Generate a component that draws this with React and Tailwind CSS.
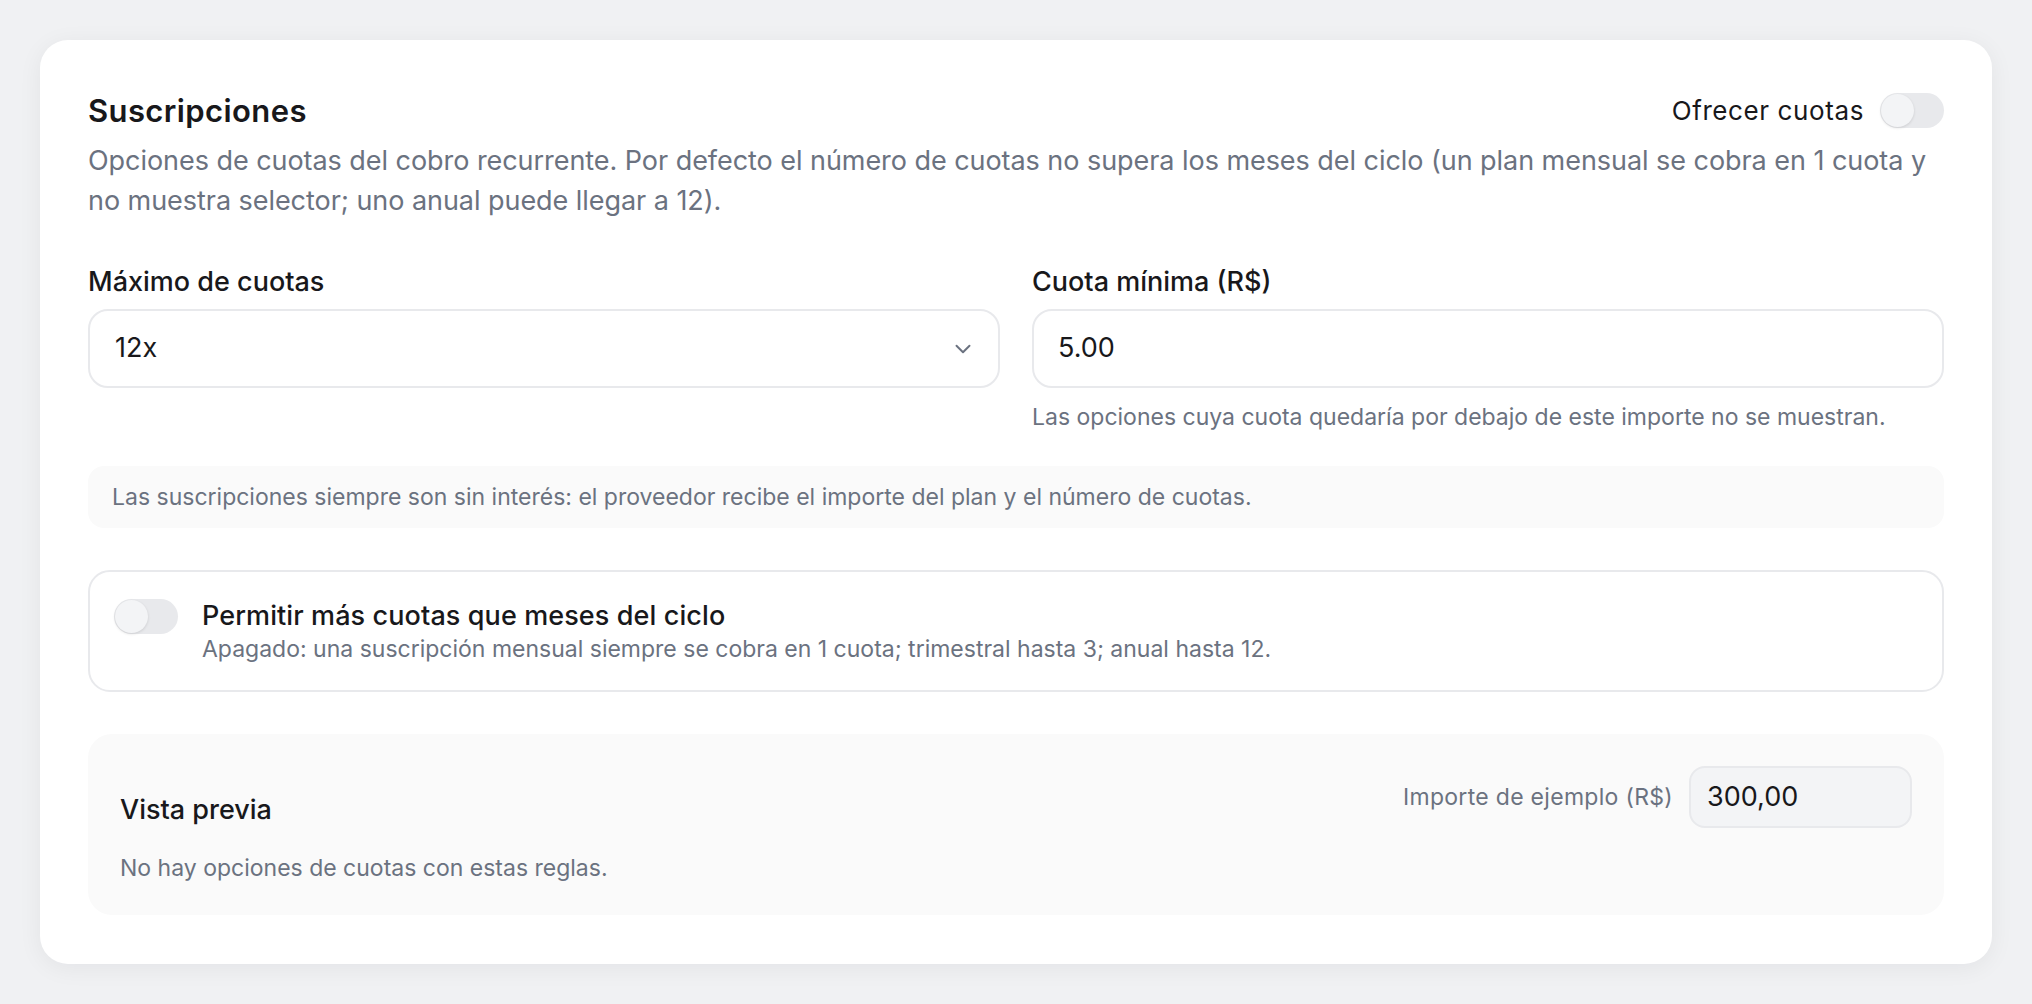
import { ChevronDown } from 'lucide-react';

function Toggle() {
  return (
    <span className="relative inline-flex h-[35px] w-[64px] shrink-0 items-center rounded-full bg-[#e8e9ec]">
      <span className="absolute left-[1px] top-[1px] h-[33px] w-[33px] rounded-full bg-[#f3f4f6] shadow-[0_1px_3px_rgba(0,0,0,0.12)]" />
    </span>
  );
}

export default function App() {
  return (
    <div className="min-h-screen bg-[#f0f1f3] p-10 font-['Inter',sans-serif] text-[#18181b]">
      <div className="rounded-[28px] bg-white px-12 pt-12 pb-[49px] shadow-[0_4px_24px_rgba(15,23,42,0.06)]">
        <div className="flex items-center justify-between">
          <h2 className="pt-[1px] text-[31px] font-semibold leading-[44px] tracking-[0.4px]">Suscripciones</h2>
          <div className="flex items-center gap-4">
            <span className="text-[26px] leading-[36px] tracking-[0.6px]">Ofrecer cuotas</span>
            <Toggle />
          </div>
        </div>
        <p className="mt-2 text-[27px] leading-[40px] tracking-[-0.05px] text-[#6b7280]">
          Opciones de cuotas del cobro recurrente. Por defecto el número de cuotas no supera los meses del ciclo (un plan mensual se cobra en 1 cuota y no muestra selector; uno anual puede llegar a 12).
        </p>

        <div className="mt-[43px] grid grid-cols-2 gap-8">
          <div>
            <label className="mb-[9px] block text-[27px] font-medium leading-[36px]">Máximo de cuotas</label>
            <div className="flex h-[79px] items-center justify-between rounded-[20px] border-2 border-[#e8e9ec] pl-[25px] pr-[22px]">
              <span className="text-[27px]">12x</span>
              <ChevronDown className="h-[26px] w-[26px] text-[#6b7280]" strokeWidth={1.8} />
            </div>
          </div>
          <div>
            <label className="mb-[9px] block text-[27px] font-medium leading-[36px]">Cuota mínima (R$)</label>
            <div className="flex h-[79px] items-center rounded-[20px] border-2 border-[#e8e9ec] px-[24px]">
              <span className="text-[27px]">5.00</span>
            </div>
            <p className="mt-[14px] text-[23px] leading-[30px] text-[#6b7280]">
              Las opciones cuya cuota quedaría por debajo de este importe no se muestran.
            </p>
          </div>
        </div>

        <div className="mt-[34px] flex h-[62px] items-center rounded-[16px] bg-[#fafafa] px-6 text-[23px] text-[#6b7280]">
          Las suscripciones siempre son sin interés: el proveedor recibe el importe del plan y el número de cuotas.
        </div>

        <div className="mt-[42px] flex items-start gap-6 rounded-[22px] border-2 border-[#e8e9ec] px-6 py-[26px]">
          <div className="pt-[1px]">
            <Toggle />
          </div>
          <div>
            <div className="text-[27px] font-medium leading-[36px] tracking-[0.1px]">Permitir más cuotas que meses del ciclo</div>
            <div className="text-[23px] leading-[30px] text-[#6b7280]">
              Apagado: una suscripción mensual siempre se cobra en 1 cuota; trimestral hasta 3; anual hasta 12.
            </div>
          </div>
        </div>

        <div className="mt-[42px] rounded-[24px] bg-[#fafafa] p-8">
          <div className="flex items-end justify-between">
            <div className="text-[27px] font-medium leading-[36px]">Vista previa</div>
            <div className="flex items-center gap-4">
              <span className="text-[23px] tracking-[0.3px] text-[#6b7280]">Importe de ejemplo (R$)</span>
              <div className="flex h-[62px] w-[223px] items-center rounded-[16px] border-2 border-[#e8e9ec] bg-[#f3f4f6] px-4 text-[27px]">
                300,00
              </div>
            </div>
          </div>
          <p className="mt-[25px] text-[23px] leading-[30px] text-[#6b7280]">
            No hay opciones de cuotas con estas reglas.
          </p>
        </div>
      </div>
    </div>
  );
}
